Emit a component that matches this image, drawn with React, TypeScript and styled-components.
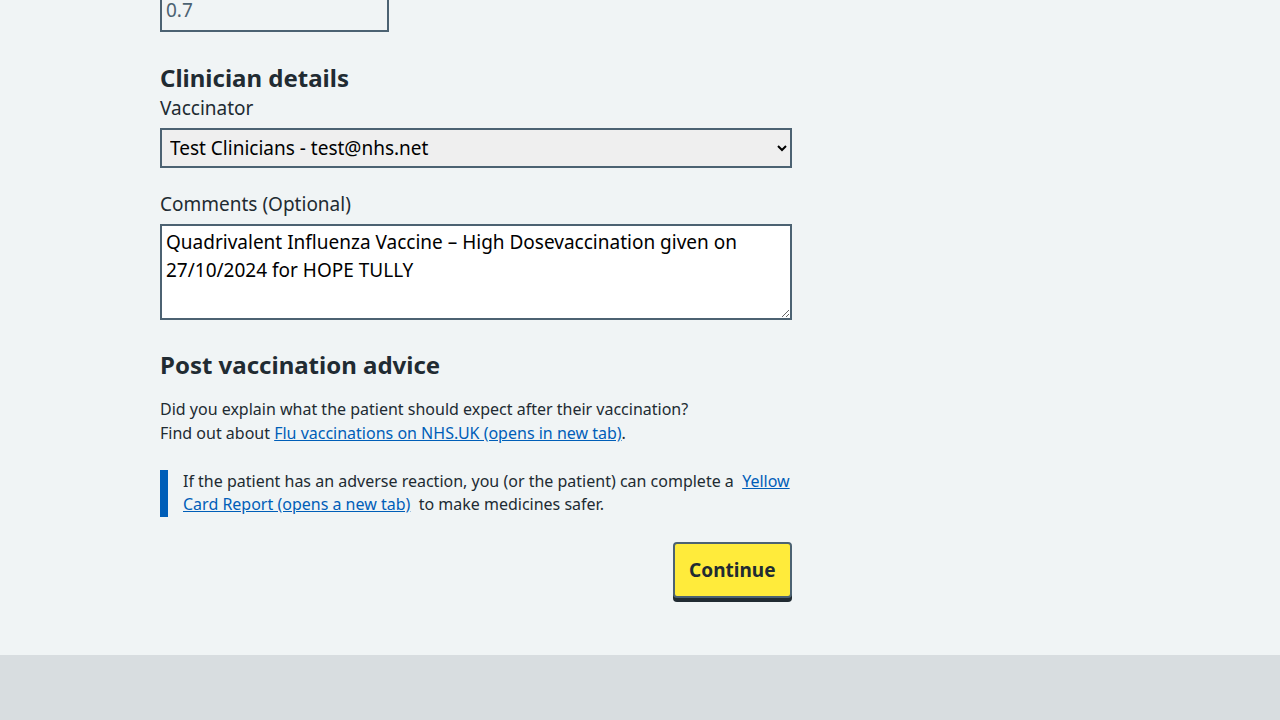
import React from "react";
import styled, { createGlobalStyle } from "styled-components";

const Global = createGlobalStyle`
  html, body { margin: 0; padding: 0; }
  body {
    background: #f0f4f5;
    font-family: "Noto Sans", Arial, sans-serif;
    color: #212b32;
    overflow: hidden;
  }
`;

const Page = styled.div`
  min-height: 720px;
  display: flex;
  flex-direction: column;
`;

const Main = styled.main`
  flex: 0 0 auto;
  height: 663px;
  margin-top: -8px;
  padding-left: 160px;
  box-sizing: border-box;
`;

const Column = styled.div`
  width: 632px;
  display: flex;
  flex-direction: column;
`;

const Footer = styled.footer`
  flex: 1 1 auto;
  background: #d8dde0;
`;

const SmallInput = styled.div`
  width: 229px;
  height: 40px;
  box-sizing: border-box;
  border: 2px solid #4c6272;
  padding: 2px 4px;
  font-size: 19px;
  line-height: 28px;
  color: #4c6272;
`;

const Heading = styled.h2<{ $top: number }>`
  margin: ${(p) => p.$top}px 0 0;
  font-size: 24px;
  line-height: 32px;
  font-weight: 700;
  color: #212b32;
`;

const Label = styled.label<{ $top: number }>`
  display: block;
  margin-top: ${(p) => p.$top}px;
  font-size: 19px;
  line-height: 28px;
  color: #212b32;
`;

const Select = styled.select`
  margin-top: 6px;
  width: 632px;
  height: 40px;
  box-sizing: border-box;
  border: 2px solid #4c6272;
  border-radius: 0;
  background: #efefef;
  font-family: inherit;
  font-size: 19px;
  color: #000;
  padding: 0 4px;
`;

const TextArea = styled.textarea`
  margin-top: 6px;
  width: 632px;
  height: 96px;
  box-sizing: border-box;
  border: 2px solid #4c6272;
  border-radius: 0;
  background: #fff;
  font-family: inherit;
  font-size: 19px;
  line-height: 28px;
  color: #000;
  padding: 2px 4px;
  resize: vertical;
`;

const Para = styled.p`
  margin: 16px 0 0;
  font-size: 16px;
  line-height: 24px;
  color: #212b32;
`;

const Link = styled.a`
  color: #005eb8;
  text-decoration: underline;
`;

const Inset = styled.div`
  margin-top: 25px;
  border-left: 8px solid #005eb8;
  padding: 0 0 1px 15px;
  font-size: 16px;
  line-height: 23px;
  color: #212b32;
`;

const Actions = styled.div`
  margin-top: 25px;
  display: flex;
  justify-content: flex-end;
`;

const Button = styled.button`
  height: 56px;
  padding: 0 14.5px;
  box-sizing: border-box;
  background: #ffeb3b;
  border: 2px solid #4c6272;
  border-radius: 4px;
  box-shadow: 0 4px 0 #212b32;
  font-family: inherit;
  font-weight: 700;
  font-size: 19px;
  color: #212b32;
`;

export default function App() {
  return (
    <Page>
      <Global />
      <Main>
        <Column>
          <SmallInput>0.7</SmallInput>
          <Heading $top={30}>Clinician details</Heading>
          <Label $top={0}>Vaccinator</Label>
          <Select defaultValue="t">
            <option value="t">Test Clinicians - test@nhs.net</option>
          </Select>
          <Label $top={22}>Comments (Optional)</Label>
          <TextArea
            defaultValue={
              "Quadrivalent Influenza Vaccine – High Dosevaccination given on 27/10/2024 for HOPE TULLY"
            }
          />
          <Heading $top={29}>Post vaccination advice</Heading>
          <Para>
            Did you explain what the patient should expect after their vaccination?
            <br />
            Find out about <Link href="#">Flu vaccinations on NHS.UK (opens in new tab)</Link>.
          </Para>
          <Inset>
            If the patient has an adverse reaction, you (or the patient) can complete a&nbsp;{" "}
            <Link href="#">Yellow Card Report (opens a new tab)</Link>&nbsp; to make medicines safer.
          </Inset>
          <Actions>
            <Button>Continue</Button>
          </Actions>
        </Column>
      </Main>
      <Footer />
    </Page>
  );
}
